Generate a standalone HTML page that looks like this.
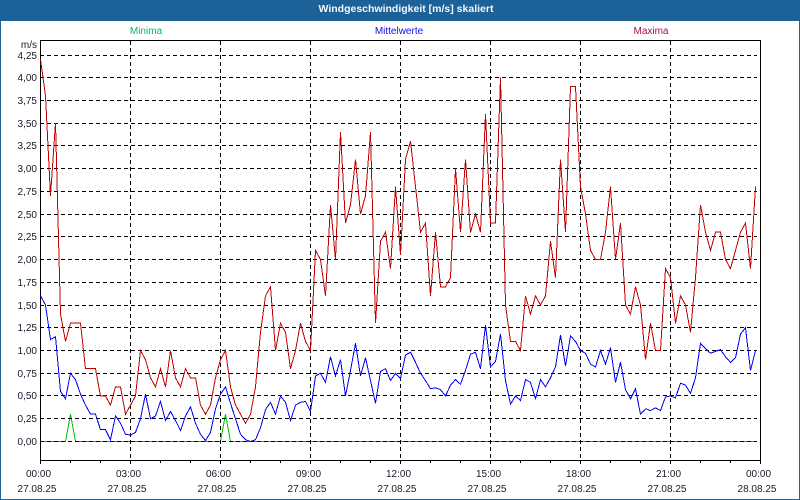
<!DOCTYPE html>
<html><head><meta charset="utf-8"><style>
html,body{margin:0;padding:0;background:#fff}
svg{display:block}
text{font-family:"Liberation Sans",sans-serif;font-size:10px;fill:#1a1a2a}
polyline{shape-rendering:crispEdges}
</style></head><body>
<svg width="800" height="500" viewBox="0 0 800 500" xmlns="http://www.w3.org/2000/svg">
<rect width="800" height="500" fill="#fff"/>
<rect x="0.5" y="0.5" width="799" height="499" fill="none" stroke="#1c6198"/>
<rect width="800" height="21" fill="#1c6198"/>
<text x="406" y="12" text-anchor="middle" font-weight="bold" style="font-size:10.5px;font-weight:bold;fill:#f4f8fc">Windgeschwindigkeit [m/s] skaliert</text>
<text x="146" y="34" text-anchor="middle" style="fill:#00b868">Minima</text>
<text x="399" y="34" text-anchor="middle" style="fill:#1010e8">Mittelwerte</text>
<text x="651" y="34" text-anchor="middle" style="fill:#a01050">Maxima</text>

<polyline fill="none" stroke="#00c000" vector-effect="non-scaling-stroke" transform="translate(0.5,441.5) scale(1,-91)" points="40,0 65,0 70,.3 75,0 220,0 225,.3 230,0 755,0"/>

<g stroke="#000" stroke-dasharray="4 3" shape-rendering="crispEdges">
<path d="M40 55.5H757M40 77.5H757M40 100.5H757M40 123.5H757M40 145.5H757M40 168.5H757M40 191.5H757M40 214.5H757M40 236.5H757M40 259.5H757M40 282.5H757M40 305.5H757M40 327.5H757M40 350.5H757M40 373.5H757M40 395.5H757M40 418.5H757M40 441.5H757"/>
<path d="M130.5 41V460M220.5 41V460M310.5 41V460M400.5 41V460M490.5 41V460M580.5 41V460M670.5 41V460"/>
</g>
<path d="M40.5 40.5H760.5V460.5H40.5Z" fill="none" stroke="#000" shape-rendering="crispEdges"/>
<path d="M40.5 460V464M70.5 460V463M100.5 460V463M130.5 460V464M160.5 460V463M190.5 460V463M220.5 460V464M250.5 460V463M280.5 460V463M310.5 460V464M340.5 460V463M370.5 460V463M400.5 460V464M430.5 460V463M460.5 460V463M490.5 460V464M520.5 460V463M550.5 460V463M580.5 460V464M610.5 460V463M640.5 460V463M670.5 460V464M700.5 460V463M730.5 460V463M760.5 460V464" stroke="#000" shape-rendering="crispEdges"/>

<polyline fill="none" stroke="#0000f0" vector-effect="non-scaling-stroke" transform="translate(0.5,441.5) scale(1,-91)" points="40,1.6 45,1.5 50,1.12 55,1.15 60,.55 65,.47 70,.75 75,.68 80,.52 85,.4 90,.3 95,.3 100,.13 105,.13 110,.02 115,.28 120,.2 125,.08 130,.07 135,.1 140,.25 145,.52 150,.25 155,.28 160,.44 165,.23 170,.33 175,.23 180,.12 185,.28 190,.38 195,.2 200,.08 205,.01 210,.1 215,.36 220,.52 225,.6 230,.42 235,.25 240,.08 245,.02 250,0 255,.02 260,.15 265,.35 270,.43 275,.3 280,.5 285,.43 290,.23 295,.4 300,.43 305,.44 310,.33 315,.72 320,.75 325,.65 330,.93 335,.72 340,.9 345,.5 350,.78 355,1.08 360,.72 365,.92 370,.67 375,.42 380,.77 385,.8 390,.67 395,.75 400,.69 405,.95 410,.98 415,.87 420,.75 425,.67 430,.58 435,.59 440,.57 445,.5 450,.62 455,.68 460,.63 465,.78 470,.96 475,.98 480,.8 485,1.28 490,.82 495,.88 500,1.18 505,.67 510,.41 515,.5 520,.45 525,.68 530,.65 535,.47 540,.68 545,.6 550,.7 555,.82 560,1.17 565,.83 570,1.16 575,1.1 580,1 585,.97 590,.85 595,.82 600,1 605,.85 610,1.03 615,.65 620,.87 625,.57 630,.47 635,.58 640,.3 645,.36 650,.34 655,.37 660,.34 665,.49 670,.5 675,.48 680,.64 685,.62 690,.53 695,.7 700,1.08 705,1.02 710,.97 715,.99 720,1.01 725,.93 730,.87 735,.92 740,1.18 745,1.25 750,.78 755,1"/>

<polyline fill="none" stroke="#c00000" vector-effect="non-scaling-stroke" transform="translate(0.5,441.5) scale(1,-91)" points="40,4.2 45,3.8 50,2.7 55,3.5 60,1.4 65,1.1 70,1.3 75,1.3 80,1.3 85,.8 90,.8 95,.8 100,.5 105,.5 110,.4 115,.6 120,.6 125,.3 130,.4 135,.5 140,1 145,.9 150,.7 155,.6 160,.8 165,.6 170,1 175,.7 180,.6 185,.8 190,.7 195,.7 200,.4 205,.3 210,.4 215,.7 220,.9 225,1 230,.6 235,.4 240,.3 245,.2 250,.3 255,.6 260,1.2 265,1.6 270,1.7 275,1 280,1.3 285,1.2 290,.8 295,1 300,1.3 305,1.1 310,1 315,2.1 320,2 325,1.6 330,2.6 335,2 340,3.4 345,2.4 350,2.6 355,3.1 360,2.5 365,2.7 370,3.4 375,1.3 380,2.2 385,2.3 390,1.9 395,2.8 400,2.05 405,3.1 410,3.3 415,2.8 420,2.3 425,2.4 430,1.6 435,2.3 440,1.7 445,1.7 450,1.8 455,3 460,2.3 465,3.1 470,2.3 475,2.5 480,2.3 485,3.6 490,2.4 495,2.4 500,4 505,1.5 510,1.1 515,1.1 520,1 525,1.6 530,1.4 535,1.6 540,1.5 545,1.6 550,2.2 555,1.8 560,3.1 565,2.3 570,3.9 575,3.9 580,2.8 585,2.5 590,2.1 595,2 600,2 605,2.3 610,2.8 615,2 620,2.4 625,1.5 630,1.4 635,1.7 640,1.5 645,.9 650,1.3 655,1 660,1 665,1.9 670,1.8 675,1.3 680,1.6 685,1.5 690,1.2 695,1.8 700,2.6 705,2.3 710,2.1 715,2.3 720,2.3 725,2 730,1.9 735,2.1 740,2.3 745,2.4 750,1.9 755,2.8"/>

<g text-anchor="end">
<text x="37" y="48">m/s</text>
<text x="37" y="59">4,25</text><text x="37" y="81">4,00</text><text x="37" y="104">3,75</text><text x="37" y="127">3,50</text><text x="37" y="149">3,25</text><text x="37" y="172">3,00</text><text x="37" y="195">2,75</text><text x="37" y="218">2,50</text><text x="37" y="240">2,25</text><text x="37" y="263">2,00</text><text x="37" y="286">1,75</text><text x="37" y="309">1,50</text><text x="37" y="331">1,25</text><text x="37" y="354">1,00</text><text x="37" y="377">0,75</text><text x="37" y="399">0,50</text><text x="37" y="422">0,25</text><text x="37" y="445">0,00</text>
</g>
<g text-anchor="middle">
<text x="38.5" y="477">00:00</text><text x="128.5" y="477">03:00</text><text x="218.5" y="477">06:00</text><text x="308.5" y="477">09:00</text><text x="398.5" y="477">12:00</text><text x="488.5" y="477">15:00</text><text x="578.5" y="477">18:00</text><text x="668.5" y="477">21:00</text><text x="758.5" y="477">00:00</text>
<text x="37" y="492">27.08.25</text><text x="127" y="492">27.08.25</text><text x="217" y="492">27.08.25</text><text x="307" y="492">27.08.25</text><text x="397" y="492">27.08.25</text><text x="487" y="492">27.08.25</text><text x="577" y="492">27.08.25</text><text x="667" y="492">27.08.25</text><text x="757" y="492">28.08.25</text>
</g>
</svg>
</body></html>
